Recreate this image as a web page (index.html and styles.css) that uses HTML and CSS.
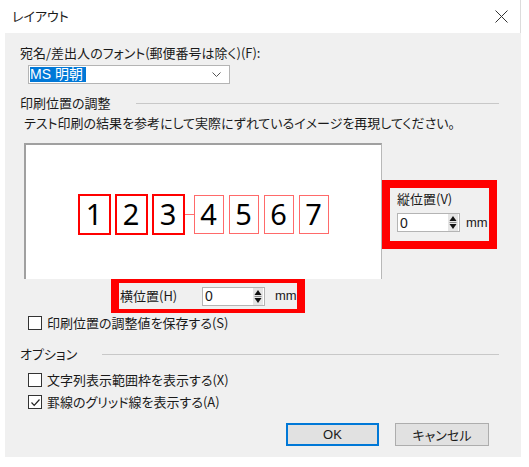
FILE: index.html
```html
<!DOCTYPE html>
<html lang="ja">
<head>
    <meta charset="UTF-8">
    <title>レイアウト</title>
    <link rel="stylesheet" href="styles.css">
</head>
<body>
    <div class="titlebar">
        <span class="title">レイアウト</span>
        <svg class="close" width="13" height="13" viewBox="0 0 13 13">
            <path d="M0.5 0.5L12.5 12.5M12.5 0.5L0.5 12.5" stroke="#333" stroke-width="1" fill="none"/>
        </svg>
    </div>
    <div class="dialog">
        <div class="label">宛名/差出人のフォント(郵便番号は除く)(F):</div>
        <div class="combo">
            <span class="combo-sel">MS 明朝</span>
            <svg class="chevron" width="9" height="5" viewBox="0 0 9 5">
                <path d="M0.5 0.5L4.5 4.5L8.5 0.5" stroke="#555" fill="none"/>
            </svg>
        </div>

        <div class="group-head">
            <span>印刷位置の調整</span>
            <span class="rule"></span>
        </div>
        <div class="hint">テスト印刷の結果を参考にして実際にずれているイメージを再現してください。</div>

        <div class="preview-row">
            <div class="preview">
                <div class="digits">
                    <span class="digit strong">1</span>
                    <span class="digit strong">2</span>
                    <span class="digit strong">3</span>
                    <span class="link"></span>
                    <span class="digit">4</span>
                    <span class="digit">5</span>
                    <span class="digit">6</span>
                    <span class="digit">7</span>
                </div>
            </div>
            <div class="redbox vbox">
                <div class="field-label">縦位置(V)</div>
                <div class="spin-row">
                    <div class="spin">
                        <span class="spin-val">0</span>
                        <span class="spin-btn">
                            <svg width="8" height="17" viewBox="0 0 8 17">
                                <path d="M4 2L7.5 7H0.5Z" fill="#111"/>
                                <path d="M0.5 8.5H7.5" stroke="#888"/>
                                <path d="M4 15L7.5 10H0.5Z" fill="#111"/>
                            </svg>
                        </span>
                    </div>
                    <span class="unit">mm</span>
                </div>
            </div>
        </div>

        <div class="redbox hbox">
            <span class="field-label hlabel">横位置(H)</span>
            <div class="spin">
                <span class="spin-val">0</span>
                <span class="spin-btn">
                    <svg width="8" height="17" viewBox="0 0 8 17">
                        <path d="M4 2L7.5 7H0.5Z" fill="#111"/>
                        <path d="M0.5 8.5H7.5" stroke="#888"/>
                        <path d="M4 15L7.5 10H0.5Z" fill="#111"/>
                    </svg>
                </span>
            </div>
            <span class="unit">mm</span>
        </div>

        <div class="check first-check">
            <span class="box"></span>
            <span>印刷位置の調整値を保存する(S)</span>
        </div>

        <div class="group-head options-head">
            <span>オプション</span>
            <span class="rule"></span>
        </div>
        <div class="check">
            <span class="box"></span>
            <span>文字列表示範囲枠を表示する(X)</span>
        </div>
        <div class="check last-check">
            <span class="box">
                <svg width="11" height="11" viewBox="0 0 11 11">
                    <path d="M1.5 5.5L4.2 8.3L9.5 2.5" stroke="#222" stroke-width="1.2" fill="none"/>
                </svg>
            </span>
            <span>罫線のグリッド線を表示する(A)</span>
        </div>

        <div class="buttons">
            <button class="btn default">OK</button>
            <button class="btn">キャンセル</button>
        </div>
    </div>
</body>
</html>
```

FILE: styles.css
```css
body {
    margin: 0;
    background-color: #ffffff;
    font-family: "Noto Sans CJK JP", "Noto Sans", sans-serif;
    font-size: 13px;
    line-height: 18px;
    color: #1a1a1a;
    font-feature-settings: "palt";
}
.titlebar {
    width: 521px;
    height: 33px;
    border-right: 1px solid #dcdcdc;
    display: flex;
    align-items: center;
    justify-content: space-between;
    padding-left: 12px;
    padding-right: 12px;
    box-sizing: border-box;
}
.title {
    margin-top: -1px;
}
.close {
    display: block;
    margin-top: -1px;
}
.dialog {
    margin-left: 5px;
    width: 516px;
    height: 424px;
    background-color: #f0f0f0;
    padding: 11px 22px 0 15px;
    box-sizing: border-box;
}
.combo {
    margin-top: 3px;
    margin-left: 8px;
    width: 202px;
    height: 19px;
    background-color: #ffffff;
    border: 1px solid #b4b4b4;
    box-sizing: border-box;
    display: flex;
    align-items: center;
    justify-content: space-between;
    padding: 0 8px 0 1px;
}
.combo-sel {
    background-color: #0078d7;
    color: #ffffff;
    height: 15px;
    line-height: 15px;
    padding-right: 3px;
    font-family: "Liberation Sans", "Noto Sans CJK JP", sans-serif;
    font-size: 14px;
}
.chevron {
    display: block;
}
.group-head {
    margin-top: 10px;
    display: flex;
    align-items: center;
}
.group-head .rule {
    flex: 1;
    height: 1px;
    margin-left: 25px;
    margin-top: 1px;
    background-color: #c8c8c8;
}
.hint {
    margin-top: 2px;
    margin-left: 4px;
}
.preview-row {
    margin-top: 11px;
    margin-left: 4px;
    display: flex;
    align-items: flex-start;
}
.preview {
    width: 358px;
    height: 136px;
    background-color: #ffffff;
    border-top: 2px solid #a0a0a0;
    border-left: 2px solid #a0a0a0;
    border-right: 1px solid #b8b8b8;
    box-sizing: border-box;
    display: flex;
    align-items: center;
    justify-content: center;
    padding-left: 4px;
    padding-top: 4px;
}
.digits {
    display: flex;
    align-items: center;
}
.digit {
    width: 30px;
    height: 39px;
    margin-right: 5px;
    border: 1.5px solid #ff6a6a;
    box-sizing: border-box;
    display: flex;
    align-items: center;
    justify-content: center;
    font-family: "Noto Sans", "Open Sans", sans-serif;
    font-size: 29px;
    font-feature-settings: normal;
    color: #000000;
}
.digit.strong {
    width: 33px;
    height: 41px;
    margin-right: 4px;
    border: 2px solid #ff0000;
}
.digit.strong:nth-child(3) {
    margin-right: 0;
}
.link {
    width: 9px;
    height: 1px;
    background-color: #ff7070;
}
.redbox {
    border: 8px solid #ff0000;
    background-color: #f0f0f0;
    box-sizing: border-box;
}
.vbox {
    width: 115px;
    height: 69px;
    margin-top: 37px;
    padding: 2px 0 0 7px;
}
.spin-row {
    margin-top: 5px;
    display: flex;
    align-items: center;
}
.spin {
    width: 63px;
    height: 19px;
    background-color: #ffffff;
    border: 1px solid #b4b4b4;
    box-sizing: border-box;
    display: flex;
    align-items: center;
    justify-content: space-between;
}
.spin-val {
    padding-left: 2px;
    font-family: "Liberation Sans", sans-serif;
    font-size: 14px;
}
.spin-btn {
    width: 10px;
    height: 17px;
    margin-right: 1px;
    background-color: #e5e5e5;
    display: flex;
    justify-content: center;
}
.spin-btn svg {
    display: block;
}
.unit {
    margin-left: 6px;
    font-family: "Liberation Sans", sans-serif;
    font-size: 13px;
}
.hbox {
    width: 194px;
    height: 36px;
    margin-top: -2px;
    margin-left: 91px;
    border-top-width: 6px;
    border-bottom-width: 4px;
    display: flex;
    align-items: center;
    padding-left: 1px;
}
.hlabel {
    width: 82px;
}
.hbox .unit {
    margin-left: 10px;
}
.check {
    margin-top: 4px;
    margin-left: 8px;
    display: flex;
    align-items: center;
    height: 18px;
}
.first-check {
    margin-top: 1px;
}
.check .box {
    width: 14px;
    height: 14px;
    border: 1px solid #333333;
    background-color: #ffffff;
    box-sizing: border-box;
    margin-right: 5px;
    display: flex;
    align-items: center;
    justify-content: center;
}
.check .box svg {
    display: block;
}
.options-head {
    margin-top: 13px;
}
.options-head + .check {
    margin-top: 8px;
}
.buttons {
    margin-top: 12px;
    display: flex;
    justify-content: flex-end;
    gap: 16px;
    padding-right: 10px;
}
.btn {
    width: 94px;
    height: 23px;
    background-color: #e1e1e1;
    border: 1px solid #adadad;
    font-family: "Noto Sans CJK JP", sans-serif;
    font-feature-settings: "palt";
    font-size: 13px;
    color: #1a1a1a;
    padding: 0;
}
.btn.default {
    width: 93px;
    border: 2px solid #0078d7;
    font-family: "Liberation Sans", sans-serif;
}
```
